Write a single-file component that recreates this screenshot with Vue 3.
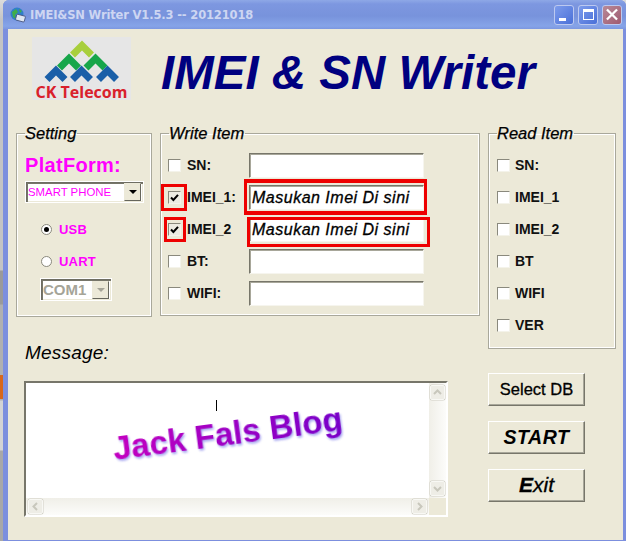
<script setup>
const writeRows = [
  { label: 'SN:', checked: false, value: '' },
  { label: 'IMEI_1:', checked: true, value: 'Masukan Imei Di sini' },
  { label: 'IMEI_2', checked: true, value: 'Masukan Imei Di sini' },
  { label: 'BT:', checked: false, value: '' },
  { label: 'WIFI:', checked: false, value: '' },
]
const readRows = ['SN:', 'IMEI_1', 'IMEI_2', 'BT', 'WIFI', 'VER']
</script>

<template>
  <div class="desk">
    <div class="window">
      <div class="titlebar">
        <svg class="appicon" viewBox="0 0 16 16" width="16" height="16">
          <circle cx="7" cy="7" r="6.5" fill="#2f7fc8" />
          <path d="M2 5 L6 2 L8 5 L5 8 L6 12 L3 10 Z" fill="#3fae4a" />
          <path d="M9 2 L12 4 L10 6 Z" fill="#3fae4a" />
          <rect x="6" y="8" width="9" height="6" rx="1" transform="rotate(15 10 11)" fill="#dfe6f2" stroke="#44507a" stroke-width="0.8" />
        </svg>
        <span class="titletext">IMEI&amp;SN Writer V1.5.3 -- 20121018</span>
        <div class="winbtns">
          <span class="wb"><i class="minbar"></i></span>
          <span class="wb"><i class="maxbox"></i></span>
          <span class="wb close">
            <svg viewBox="0 0 19 19" width="19" height="19"><path d="M5 5 L14 14 M14 5 L5 14" stroke="#fff" stroke-width="2.4" stroke-linecap="square" /></svg>
          </span>
        </div>
      </div>

      <div class="content">
        <header class="head">
          <div class="logo">
            <svg class="marks" viewBox="0 0 100 48" width="100" height="48">
              <polyline points="40.5,18 50,8.5 59.5,18" class="c1" />
              <polyline points="27.5,31 37,21.5 46.5,31" class="c2" />
              <polyline points="54,31 63.5,21.5 73,31" class="c2" />
              <polyline points="15,42.5 24,33.5 33,42.5" class="c3" />
              <polyline points="40.5,42.5 49.5,33.5 58.5,42.5" class="c3" />
              <polyline points="66.5,42.5 75.5,33.5 84.5,42.5" class="c3" />
            </svg>
            <span class="logotext">CK Telecom</span>
          </div>
          <h1 class="apptitle">IMEI &amp; SN Writer</h1>
        </header>

        <div class="groups">
          <fieldset class="group g-setting">
            <legend>Setting</legend>
            <div class="platform">PlatForm:</div>
            <div class="combo platform-combo">
              <span>SMART PHONE</span>
              <i class="drop"><b class="arrow"></b></i>
            </div>
            <div class="radio first"><i class="dot on"></i><span>USB</span></div>
            <div class="radio"><i class="dot"></i><span>UART</span></div>
            <div class="combo com">
              <span>COM1</span>
              <i class="drop off"><b class="arrow"></b></i>
            </div>
          </fieldset>

          <fieldset class="group g-write">
            <legend>Write Item</legend>
            <div v-for="r in writeRows" :key="r.label" class="wrow">
              <i class="check" :class="{ on: r.checked }">
                <svg v-if="r.checked" viewBox="0 0 11 11" width="11" height="11"><path d="M2 5.5 L4.4 8 L9 2.8" fill="none" stroke="#000" stroke-width="2" /></svg>
              </i>
              <span class="rowlabel">{{ r.label }}</span>
              <div class="field">{{ r.value }}</div>
            </div>
            <i class="mark m1"></i>
            <i class="mark m2"></i>
            <i class="mark m3"></i>
            <i class="mark m4"></i>
          </fieldset>

          <fieldset class="group g-read">
            <legend>Read Item</legend>
            <div v-for="r in readRows" :key="r" class="rrow">
              <i class="check"></i>
              <span class="rowlabel">{{ r }}</span>
            </div>
          </fieldset>
        </div>

        <div class="lower">
          <div class="msgcol">
            <div class="msglabel">Message:</div>
            <div class="msgbox">
              <div class="msgtext">
                <i class="caret"></i>
                <span class="blog">Jack Fals Blog</span>
              </div>
              <div class="vbar">
                <i class="sb"><svg viewBox="0 0 15 15" width="15" height="15"><path d="M4 9 L7.5 5.5 L11 9" class="chev" /></svg></i>
                <i class="sb"><svg viewBox="0 0 15 15" width="15" height="15"><path d="M4 6 L7.5 9.5 L11 6" class="chev" /></svg></i>
              </div>
              <div class="hbar">
                <i class="sb"><svg viewBox="0 0 15 15" width="15" height="15"><path d="M9 4 L5.5 7.5 L9 11" class="chev" /></svg></i>
                <i class="sb"><svg viewBox="0 0 15 15" width="15" height="15"><path d="M6 4 L9.5 7.5 L6 11" class="chev" /></svg></i>
              </div>
              <div class="corner"></div>
            </div>
          </div>
          <div class="actions">
            <button class="act sel">Select DB</button>
            <button class="act start">START</button>
            <button class="act exit"><b>E</b>xit</button>
          </div>
        </div>
      </div>
    </div>
    <i class="scrap"></i>
  </div>
</template>

<style>
html, body { margin: 0; padding: 0; background: #fff; }
</style>

<style scoped>
* { box-sizing: border-box; }
.desk {
  position: relative;
  width: 626px;
  height: 541px;
  overflow: hidden;
  padding-left: 3px;
  background: linear-gradient(#dcdcdc 0, #c4c4c4 20px, #c4c4c4 270px, #9a9a9a 271px, #9a9a9a 304px, #b0b0b0 305px, #b0b0b0 400px, #d4d4d4 401px, #d4d4d4 450px, #a8a8a8 451px, #a8a8a8 541px);
  font-family: "Liberation Sans", Arial, sans-serif;
}
.scrap { position: absolute; left: 0; top: 375px; width: 3px; height: 24px; background: #d8681c; }
.window {
  width: 623px;
  height: 541px;
  display: flex;
  flex-direction: column;
  background: #7c8fde;
  padding: 0 3px 1px 5px;
  border-radius: 6px 6px 0 0;
}
.titlebar {
  height: 29px;
  margin: 0 -3px 0 -5px;
  padding: 0 4px 0 7px;
  display: flex;
  align-items: center;
  border-radius: 6px 6px 0 0;
  background: linear-gradient(#8ea8e6 0, #7d97e0 4px, #7893dc 16px, #86a4e8 26px, #7c97e0 29px);
}
.appicon { margin-right: 4px; }
.titletext {
  font-family: "DejaVu Sans", sans-serif;
  font-size: 11.5px;
  font-weight: 700;
  color: #cdd6f2;
  letter-spacing: -0.15px;
}
.winbtns { margin-left: auto; display: flex; gap: 4px; }
.wb {
  position: relative;
  width: 20px;
  height: 20px;
  display: flex;
  align-items: center;
  justify-content: center;
  border: 1px solid #bcc9f0;
  border-radius: 3px;
  background: linear-gradient(135deg, #7d9cec, #4a70d8);
}
.minbar { position: absolute; left: 4px; bottom: 3px; width: 7px; height: 3px; background: #fff; }
.maxbox { width: 11px; height: 11px; border: 1px solid #fff; border-top-width: 3px; }
.close { background: linear-gradient(135deg, #b88a98, #a05a70); }

.content {
  flex: 1;
  background: #ece9d8;
  padding: 8px 6px 0 8px;
}
.head { height: 88px; display: flex; align-items: flex-start; padding-left: 16px; }
.logo {
  width: 99px;
  height: 63px;
  background: #e6e6e6;
  display: flex;
  flex-direction: column;
  align-items: center;
}
.marks { display: block; margin-top: 0; }
.marks polyline { fill: none; stroke-width: 7; stroke-miterlimit: 8; }
.c1 { stroke: #a8cf3c; }
.c2 { stroke: #17a64a; }
.c3 { stroke: #1a5fa8; }
.logotext {
  font-family: "Open Sans", sans-serif;
  font-size: 16px;
  line-height: 15px;
  font-weight: 700;
  color: #d9202c;
  white-space: nowrap;
}
.apptitle {
  margin: 2px 0 0 30px;
  font-size: 47.5px;
  line-height: 68px;
  font-weight: 700;
  font-style: italic;
  color: #000080;
  white-space: nowrap;
}

.groups { display: flex; align-items: flex-start; gap: 8px; }
.group {
  position: relative;
  margin: 0;
  padding: 0;
  min-width: 0;
  border: 1px solid #a9a89b;
  box-shadow: 0 0 0 1px #fff inset;
}
.group legend {
  margin-left: 0;
  padding: 0 1px 0 0;
  font-size: 16.5px;
  line-height: 17px;
  font-style: italic;
  color: #000;
  -webkit-text-stroke: 0.25px #000;
}
.g-setting { width: 136px; height: 192px; padding-left: 8px; }
.g-write { width: 320px; height: 191px; padding: 7px 0 0 7px; }
.g-write legend { margin-left: 1px; }
.g-read { width: 128px; height: 224px; padding: 7px 0 0 8px; }

.platform {
  margin-top: 11px;
  font-size: 20px;
  line-height: 24px;
  font-weight: 700;
  letter-spacing: 0.3px;
  color: #ff00ff;
}
.combo {
  display: flex;
  align-items: center;
  height: 22px;
  background: #fff;
  border: 1px solid #fff;
  box-shadow: inset 1px 1px 0 #6f6e63, inset 2px 2px 0 #77766a, inset -1px -1px 0 #ece9d8;
  padding-left: 2px;
}
.platform-combo { width: 119px; margin-top: 4px; font-size: 11.4px; color: #ff00ff; }
.drop {
  margin-left: auto;
  width: 17px;
  height: 18px;
  margin-right: 2px;
  display: flex;
  align-items: center;
  justify-content: center;
  background: #ece9d8;
  border: 1px solid;
  border-color: #ece9d8 #66665c #66665c #ece9d8;
}
.arrow { width: 0; height: 0; border: 4px solid transparent; border-top: 4px solid #000; border-bottom: 0; }
.drop.off .arrow { border-top-color: #a5a498; }
.radio {
  display: flex;
  align-items: center;
  height: 32px;
  padding-left: 16px;
  font-size: 13px;
  font-weight: 700;
  color: #ff00ff;
  gap: 7px;
  letter-spacing: 0.2px;
}
.radio.first { margin-top: 10px; }
.dot {
  width: 11px;
  height: 11px;
  border-radius: 50%;
  background: #fff;
  border: 1px solid #8a897d;
  display: flex;
  align-items: center;
  justify-content: center;
}
.dot.on::after { content: ""; width: 5px; height: 5px; border-radius: 50%; background: #000; }
.com {
  width: 72px;
  height: 23px;
  margin: 1px 0 0 15px;
  font-size: 15px;
  font-weight: 700;
  color: #a5a498;
  background: #fff;
}
.com .drop { width: 17px; }

.wrow, .rrow {
  display: flex;
  align-items: center;
  height: 32px;
}
.check {
  flex: none;
  width: 13px;
  height: 13px;
  background: #fff;
  border: 1px solid;
  border-color: #8a897d #f4f3ea #f4f3ea #8a897d;
  display: flex;
  align-items: center;
  justify-content: center;
}
.check.on { background: #ecebe2; }
.rowlabel {
  font-size: 14px;
  font-weight: 700;
  color: #111;
  margin-left: 6px;
  white-space: nowrap;
}
.wrow .rowlabel { width: 62px; }
.field {
  width: 175px;
  height: 25px;
  background: #fff;
  border: 1px solid;
  border-color: #77766a #f6f5ee #f6f5ee #77766a;
  box-shadow: inset 1px 1px 0 #a8a79a;
  padding-left: 2px;
  font-size: 16px;
  line-height: 23px;
  font-style: italic;
  font-weight: 400;
  letter-spacing: 0.5px;
  color: #000;
  -webkit-text-stroke: 0.3px #000;
  white-space: nowrap;
}
.mark { position: absolute; border: 3px solid #ee0000; }
.m1 { left: 0; top: 42px; width: 26px; height: 27px; }
.m2 { left: 3px; top: 75px; width: 22px; height: 25px; }
.m3 { left: 83px; top: 37px; width: 183px; height: 36px; border-width: 4px 3px; }
.m4 { left: 86px; top: 75px; width: 183px; height: 30px; }

.g-read .rowlabel { margin-left: 5px; }

.lower { display: flex; margin-top: -11px; }
.msgcol { width: 456px; padding-left: 8px; }
.msglabel {
  height: 39px;
  margin-top: 4px;
  padding-left: 1px;
  font-size: 19px;
  line-height: 22px;
  letter-spacing: 0.2px;
  font-style: italic;
  color: #000;
}
.msgbox {
  position: relative;
  width: 424px;
  height: 136px;
  display: grid;
  grid-template-columns: 1fr 17px;
  grid-template-rows: 1fr 17px;
  border: 2px solid;
  border-color: #77766a #fff #fff #77766a;
  background: #fff;
}
.msgtext { position: relative; overflow: hidden; }
.caret { position: absolute; left: 190px; top: 17px; width: 1px; height: 11px; background: #000; }
.blog {
  position: absolute;
  left: 86px;
  top: 31px;
  font-size: 33px;
  line-height: 40px;
  font-weight: 700;
  white-space: nowrap;
  transform: rotate(-7.5deg);
  background: linear-gradient(90deg, #c400c0, #7800c8);
  -webkit-background-clip: text;
  background-clip: text;
  color: transparent;
  filter: drop-shadow(1px 2px 1px #a8a8f0);
}
.vbar, .hbar { display: flex; justify-content: space-between; }
.vbar {
  grid-column: 2;
  grid-row: 1;
  flex-direction: column;
  background: linear-gradient(90deg, #f0efe8, #fcfcfa);
  padding: 2px 1px;
}
.hbar {
  grid-column: 1;
  grid-row: 2;
  background: linear-gradient(#f0efe8, #fcfcfa);
  padding: 1px 2px;
}
.corner { grid-column: 2; grid-row: 2; background: #ece9d8; }
.sb {
  width: 15px;
  height: 15px;
  display: block;
  background: #eeede6;
  border: 1px solid #f8f8f4;
  border-radius: 2px;
  box-shadow: 0 0 0 0.5px #cfcec4;
}
.sb svg { display: block; margin: -1px; }
.chev { fill: none; stroke: #c8c7bc; stroke-width: 2; }

.actions {
  width: 97px;
  margin-left: 16px;
  padding-top: 35px;
  display: flex;
  flex-direction: column;
  gap: 15px;
}
.act {
  width: 97px;
  height: 33px;
  padding: 0 0 1px;
  background: #ece9d8;
  border: 1px solid;
  border-color: #fff #77766a #77766a #fff;
  box-shadow: inset -1px -1px 0 #a8a79a;
  font-family: "Liberation Sans", Arial, sans-serif;
  color: #000;
}
.sel { font-size: 16.5px; -webkit-text-stroke: 0.3px #000; }
.start { font-size: 19.5px; font-weight: 700; font-style: italic; letter-spacing: 0.6px; }
.exit { font-size: 21px; font-style: italic; -webkit-text-stroke: 0.3px #000; }
.exit b { font-weight: 700; }
</style>
